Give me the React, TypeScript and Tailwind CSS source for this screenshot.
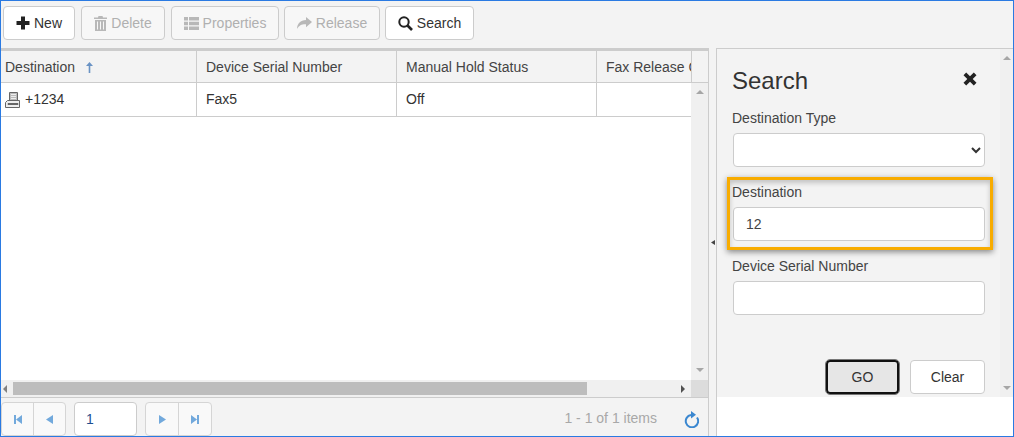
import type { ReactNode } from 'react'

const font = "font-['Liberation_Sans',Arial,sans-serif]"

function ToolButton({ icon, label, disabled, className }: { icon: ReactNode; label: string; disabled?: boolean; className: string }) {
  return (
    <div
      className={`flex h-[34px] items-center justify-center gap-[4px] rounded-[4px] border border-[#cccccc] text-[14px] ${className} ${
        disabled ? 'bg-[#f7f7f7] text-[#b0b0b0]' : 'bg-white text-[#333333]'
      }`}
    >
      {icon}
      <span>{label}</span>
    </div>
  )
}

const PlusIcon = () => (
  <svg width="14" height="14" viewBox="0 0 14 14" fill="#222222">
    <path d="M5 0.500h4v4.500h4.500v4H9v4.500H5V9H0.500V5H5z" />
  </svg>
)

const TrashIcon = () => (
  <svg width="13" height="15" viewBox="0 0 13 15" fill="#b8b8b8">
    <path d="M4.500 0h4l.5 1.500h4V3H0V1.500h4zM1 4h11v11H1zM3 5.500v8h1v-8zM6 5.500v8h1v-8zM9 5.500v8h1v-8z" fillRule="evenodd" />
  </svg>
)

const ListIcon = () => (
  <svg width="15" height="13" viewBox="0 0 15 13" fill="#b8b8b8">
    <path d="M0 0h4v3.600H0zM5 0h10v3.600H5zM0 4.700h4v3.600H0zM5 4.700h10v3.600H5zM0 9.400h4V13H0zM5 9.400h10V13H5z" />
  </svg>
)

const ShareIcon = () => (
  <svg width="15" height="12" viewBox="0 0 15 12" fill="#b8b8b8">
    <path d="M9 0l6 5-6 5.200V7.200C5 7 2.200 8 0 12c.2-5.500 3.500-8.700 9-9z" />
  </svg>
)

const SearchIcon = () => (
  <svg width="15" height="15" viewBox="0 0 15 15" fill="none" stroke="#222222" strokeWidth="2">
    <circle cx="6" cy="6" r="4.700" />
    <path d="M9.500 9.500L14 14" strokeWidth="2.600" />
  </svg>
)

const FaxIcon = () => (
  <svg width="16" height="16" viewBox="0 0 16 16" fill="none" stroke="#666666" strokeWidth="1">
    <path d="M4.500 .5h8v8h-8z" fill="#bcbcbc" />
    <path d="M6 2.500h5M6 4.500h5M6 6.500h5" stroke="#eeeeee" />
    <path d="M.5 15.500v-5l2-2h12v7z" fill="#eeeeee" />
    <path d="M3 11.500h10v1H3z" fill="#8a8a8a" />
  </svg>
)

function Tri({ dir, color }: { dir: 'up' | 'down' | 'left' | 'right'; color: string }) {
  if (dir === 'up' || dir === 'down') {
    return (
      <svg width="8" height="4" viewBox="0 0 8 4" fill={color}>
        <path d={dir === 'up' ? 'M0 4L4 0L8 4z' : 'M0 0H8L4 4z'} />
      </svg>
    )
  }
  return (
    <svg width="4" height="8" viewBox="0 0 4 8" fill={color}>
      <path d={dir === 'left' ? 'M4 0V8L0 4z' : 'M0 0L4 4L0 8z'} />
    </svg>
  )
}

const PagerTri = ({ flip }: { flip?: boolean }) => (
  <svg width="7" height="9" viewBox="0 0 7 9" fill="#72a9dc">
    <path d={flip ? 'M0 0l7 4.500-7 4.500z' : 'M7 0L0 4.500 7 9z'} />
  </svg>
)

const PagerEdge = ({ flip }: { flip?: boolean }) => (
  <svg width="8" height="9" viewBox="0 0 8 9" fill="#72a9dc">
    <path d={flip ? 'M0 0l6 4.500-6 4.500zM6 0h2v9H6z' : 'M8 0L2 4.500l6 4.500zM0 0h2v9H0z'} />
  </svg>
)

function Field({ label, children, top }: { label: string; children: ReactNode; top: string }) {
  return (
    <div className={`flex flex-col ${top}`}>
      <label className="h-[17px] text-[14px] leading-[17px] text-[#444444]">{label}</label>
      {children}
    </div>
  )
}

const HeaderCell = ({ w, pl, children }: { w: string; pl: string; children: ReactNode }) => (
  <div className={`flex h-full shrink-0 items-center overflow-hidden whitespace-nowrap border-r border-[#cccccc] pt-[2px] ${w} ${pl}`}>
    {children}
  </div>
)

export default function App() {
  return (
    <div className={`flex h-[437px] w-[1014px] flex-col overflow-hidden border border-[#2a7ae2] bg-white text-[14px] text-[#333333] ${font}`}>
      <div className="flex h-[47px] shrink-0 bg-[#f3f3f3] pl-[2px] pt-[5px]">
        <ToolButton icon={<PlusIcon />} label="New" className="w-[72px]" />
        <ToolButton icon={<TrashIcon />} label="Delete" className="ml-[6px] w-[84px]" disabled />
        <ToolButton icon={<ListIcon />} label="Properties" className="ml-[6px] w-[108px]" disabled />
        <ToolButton icon={<ShareIcon />} label="Release" className="ml-[5px] w-[96px]" disabled />
        <ToolButton icon={<SearchIcon />} label="Search" className="ml-[5px] w-[89px]" />
      </div>

      <div className="relative flex min-h-0 flex-1">
        {/* grid */}
        <div className="flex w-[707px] shrink-0 flex-col border-t-[3px] border-[#cccccc]">
          <div className="flex h-[32px] shrink-0 border-b border-[#cccccc] bg-[#f3f3f3] text-[#444444]">
            <HeaderCell w="w-[196px]" pl="pl-[4px]">
              <span>Destination</span>
              <svg className="ml-[11px]" width="7" height="11" viewBox="0 0 7 11" fill="#6a93c4">
                <path d="M3.500 0L7 4H4.300v7H2.700V4H0z" />
              </svg>
            </HeaderCell>
            <HeaderCell w="w-[200px]" pl="pl-[9px]">Device Serial Number</HeaderCell>
            <HeaderCell w="w-[200px]" pl="pl-[9px]">Manual Hold Status</HeaderCell>
            <HeaderCell w="w-[95px]" pl="pl-[9px]">Fax Release Code</HeaderCell>
          </div>

          <div className="flex h-[297px] shrink-0">
            <div className="w-[690px] shrink-0">
              <div className="flex h-[34px] w-[691px] border-b border-[#cccccc]">
                <div className="flex w-[196px] shrink-0 items-center gap-[4px] border-r border-[#cccccc] pl-[4px]">
                  <FaxIcon />
                  <span>+1234</span>
                </div>
                <div className="flex w-[200px] shrink-0 items-center border-r border-[#cccccc] pl-[9px]">Fax5</div>
                <div className="flex w-[200px] shrink-0 items-center border-r border-[#cccccc] pl-[9px]">Off</div>
                <div className="w-[95px] shrink-0" />
              </div>
            </div>
            <div className="z-10 flex w-[17px] shrink-0 flex-col items-center justify-between bg-[#f0f0f0] pb-[8px] pt-[7px]">
              <Tri dir="up" color="#a6a6a6" />
              <Tri dir="down" color="#a6a6a6" />
            </div>
          </div>

          <div className="flex h-[17px] shrink-0">
            <div className="flex w-[690px] shrink-0 items-center bg-[#f0f0f0] pl-[2px] pr-[6px]">
              <Tri dir="left" color="#808080" />
              <div className="ml-[6px] h-[13px] w-[574px] bg-[#bdbdbd]" />
              <div className="flex-1" />
              <Tri dir="right" color="#505050" />
            </div>
            <div className="flex-1 bg-[#dcdcdc]" />
          </div>

          <div className="flex flex-1 items-end border-t border-[#cccccc] bg-[#f3f3f3]">
            <div className="flex h-[34px] w-[65px] rounded-[4px] border border-[#d5d5d5] bg-[#f9f9f9]">
              <div className="flex flex-1 items-center justify-center border-r border-[#d5d5d5]"><PagerEdge /></div>
              <div className="flex flex-1 items-center justify-center"><PagerTri /></div>
            </div>
            <div className="ml-[8px] flex h-[34px] w-[63px] items-center rounded-[4px] border border-[#cccccc] bg-white pl-[11px] text-[#1f4f8f]">1</div>
            <div className="ml-[8px] flex h-[34px] w-[67px] rounded-[4px] border border-[#d5d5d5] bg-[#f9f9f9]">
              <div className="flex flex-1 items-center justify-center border-r border-[#d5d5d5]"><PagerTri flip /></div>
              <div className="flex flex-1 items-center justify-center"><PagerEdge flip /></div>
            </div>
            <div className="mb-[7px] ml-auto text-[#a8a8a8]">1 - 1 of 1 items</div>
            <svg className="mb-[8px] ml-[26px] mr-[9px]" width="16" height="17" viewBox="0 0 16 17" fill="none">
              <path d="M14 6.500A6.200 6.200 0 1 1 8 4" stroke="#3a87d0" strokeWidth="2" />
              <path d="M8 0v7.500l5-3.700z" fill="#3a87d0" />
            </svg>
          </div>
        </div>

        {/* splitter */}
        <div className="flex w-[9px] shrink-0 items-center justify-center border-x border-[#cccccc] bg-[#f3f3f3]">
          <svg width="4" height="5" viewBox="0 0 4 5" fill="#444444">
            <path d="M4 0V5L0 2.500z" />
          </svg>
        </div>

        {/* search panel */}
        <div className="flex flex-1 flex-col border-t border-[#cccccc]">
          <div className="flex h-[348px] shrink-0 bg-[#f3f3f3]">
            <div className="flex w-[283px] shrink-0 flex-col px-[15px]">
              <div className="mt-[18px] flex h-[28px] items-center justify-between pr-[8px]">
                <span className="text-[24px] leading-[28px] text-[#333333]">Search</span>
                <svg className="-translate-y-[2px]" width="14" height="14" viewBox="0 0 14 14" fill="#222222">
                  <path d="M3.200 0.500L7 4.300 10.800 0.500 13.500 3.200 9.700 7l3.800 3.800-2.700 2.700L7 9.700 3.200 13.500 0.500 10.800 4.300 7 0.500 3.200z" />
                </svg>
              </div>
              <Field label="Destination Type" top="mt-[15px]">
                <select className="mt-[6px] ml-px h-[34px] rounded-[4px] border border-[#cccccc] bg-white" />
              </Field>
              <Field label="Destination" top="mt-[17px]">
                <input
                  readOnly
                  value="12"
                  className="mt-[6px] ml-px h-[34px] rounded-[4px] border border-[#cccccc] bg-white pl-[12px] text-[#444444]"
                />
              </Field>
              <Field label="Device Serial Number" top="mt-[17px]">
                <input readOnly className="mt-[6px] ml-px h-[34px] rounded-[4px] border border-[#cccccc] bg-white" />
              </Field>
              <div className="mt-[45px] flex justify-end gap-[11px]">
                <div className="flex h-[34px] w-[73px] items-center justify-center rounded-[4px] border-[2px] border-[#111111] bg-[#e6e6e6] outline outline-1 outline-[#777777]">GO</div>
                <div className="flex h-[34px] w-[75px] items-center justify-center rounded-[4px] border border-[#cccccc] bg-white">Clear</div>
              </div>
            </div>
            <div className="flex flex-1 flex-col items-center justify-between bg-[#f0f0f0] pb-[7px] pt-[7px]">
              <Tri dir="up" color="#a6a6a6" />
              <Tri dir="down" color="#a6a6a6" />
            </div>
          </div>
        </div>

        {/* callout round the Destination field */}
        <div className="absolute left-[726px] top-[129px] h-[73px] w-[266px] border-[3px] border-[#f8ac00] shadow-[0_2px_6px_rgba(0,0,0,0.45),inset_0_3px_5px_rgba(0,0,0,0.2)]" />
      </div>
    </div>
  )
}
